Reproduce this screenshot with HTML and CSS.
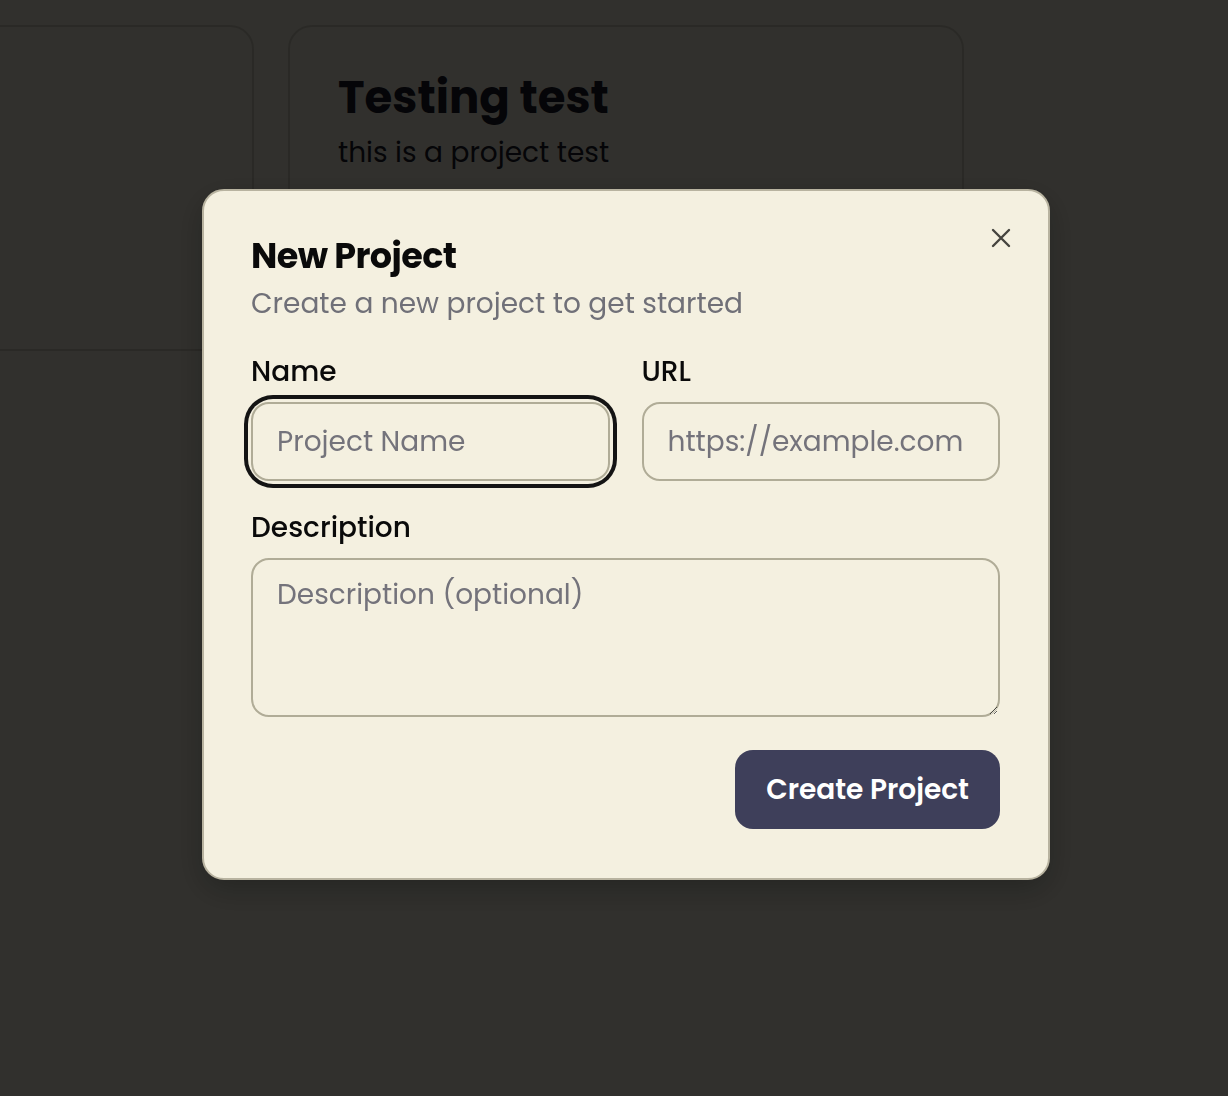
FILE: index.html
```html
<!DOCTYPE html>
<html lang="en">
<head>
<meta charset="utf-8">
<title>Projects</title>
<link rel="stylesheet" href="styles.css">
</head>
<body>
<main class="page">
  <div class="cards">
    <article class="card"></article>
    <article class="card">
      <h2 class="card-title">Testing test</h2>
      <p class="card-desc">this is a project test</p>
    </article>
  </div>
</main>
<div class="overlay"></div>
<section class="modal" role="dialog" aria-labelledby="modal-title">
  <button class="close" aria-label="Close">
    <svg width="22" height="22" viewBox="0 0 22 22" fill="none" stroke="#45443f" stroke-width="2.4" stroke-linecap="round">
      <path d="M3 3L19 19M19 3L3 19"/>
    </svg>
  </button>
  <h1 id="modal-title" class="modal-title">New Project</h1>
  <p class="modal-sub">Create a new project to get started</p>
  <form class="form">
    <div class="row">
      <label class="field">
        <span class="label">Name</span>
        <span class="ring"><input class="input" type="text" placeholder="Project Name"></span>
      </label>
      <label class="field">
        <span class="label">URL</span>
        <span class="ring plain"><input class="input" type="text" placeholder="https://example.com"></span>
      </label>
    </div>
    <label class="field">
      <span class="label">Description</span>
      <textarea class="textarea" placeholder="Description (optional)"></textarea>
    </label>
    <div class="actions">
      <button type="button" class="primary">Create Project</button>
    </div>
  </form>
</section>
</body>
</html>
```
FILE: styles.css
```css
* { box-sizing: border-box; }
html, body { margin: 0; height: 100%; }
body {
  background: #f4f0e0;
  font-family: "Poppins", "Inter", "Noto Sans", sans-serif;
  color: #1a1a24;
  overflow: hidden;
}
.page { padding-top: 25px; }
.cards {
  display: flex;
  gap: 34px;
  margin-left: -422px;
}
.card {
  flex: 0 0 676px;
  height: 326px;
  border: 2px solid #d2cdbe;
  border-radius: 24px;
  padding: 44px 48px;
}
.card-title {
  margin: 0;
  font-size: 45px;
  font-weight: 700;
  line-height: 1.2;
  color: #1a1a2a;
}
.card-desc {
  margin: 10px 0 0;
  font-size: 28px;
  line-height: 1.3;
  color: #1a1a2a;
}
.overlay {
  position: fixed;
  inset: 0;
  background: rgba(0, 0, 0, 0.8);
}
.modal {
  position: fixed;
  left: 202px;
  top: 189px;
  width: 848px;
  background: #f4f0e0;
  border: 2px solid #b8b3a0;
  border-radius: 22px;
  padding: 40px 48px 49px 47px;
  box-shadow: 0 10px 30px rgba(0,0,0,0.25);
}
.close {
  position: absolute;
  top: 36px;
  right: 36px;
  width: 22px;
  height: 22px;
  padding: 0;
  border: 0;
  background: none;
  display: flex;
}
.modal-title {
  margin: 0;
  font-size: 35px;
  font-weight: 700;
  letter-spacing: -0.6px;
  line-height: 49px;
  color: #0a0a0a;
}
.modal-sub {
  margin: 3px 0 0;
  font-size: 28px;
  line-height: 42px;
  color: #707078;
}
.form {
  margin-top: 26px;
  display: flex;
  flex-direction: column;
  gap: 26px;
}
.row {
  display: grid;
  grid-template-columns: 1fr 1fr;
  gap: 32px;
}
.field { display: flex; flex-direction: column; gap: 9px; }
.label {
  font-size: 28px;
  font-weight: 500;
  line-height: 42px;
  color: #0a0a0a;
}
.ring {
  display: block;
  border-radius: 22px;
  box-shadow: 0 0 0 3px #f4f0e0, 0 0 0 7px #141414;
}
.ring.plain { box-shadow: none; }
.input, .textarea {
  display: block;
  width: 100%;
  font: inherit;
  font-size: 28px;
  color: #1a1a24;
  background: #f4f0e0;
  border: 2px solid #b0ac97;
  border-radius: 18px;
  outline: none;
}
.input {
  height: 79px;
  padding: 0 24px;
}
.textarea {
  height: 159px;
  padding: 14px 24px;
  resize: vertical;
  line-height: 42px;
}
.input::placeholder, .textarea::placeholder { color: #74737b; }
.actions {
  display: flex;
  justify-content: flex-end;
  margin-top: 7px;
}
.primary {
  height: 79px;
  padding: 0 31px;
  border: 0;
  border-radius: 18px;
  background: #3e3f5a;
  color: #ffffff;
  font: inherit;
  font-size: 28px;
  font-weight: 600;
}
```
